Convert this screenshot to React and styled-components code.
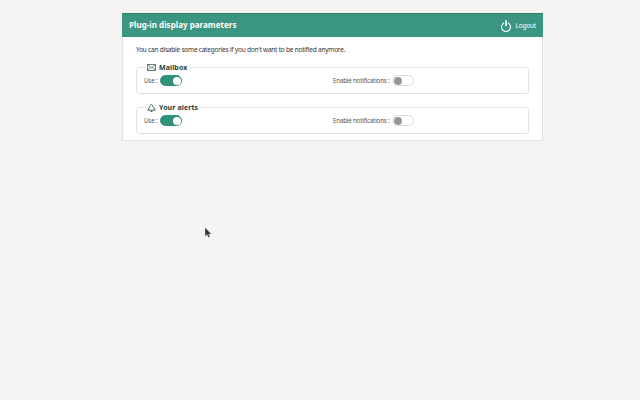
import React from 'react';
import styled, { createGlobalStyle } from 'styled-components';

const GlobalStyle = createGlobalStyle`
  html, body {
    margin: 0;
    height: 100%;
    background: #f5f4f2;
    font-family: "Noto Sans", "Open Sans", sans-serif;
    overflow: hidden;
  }
  * {
    box-sizing: border-box;
  }
`;

const Page = styled.div`
  position: relative;
  width: 640px;
  height: 400px;
  padding: 13px 0 0 122px;
`;

const Panel = styled.div`
  width: 421px;
  height: 128px;
  background: #fff;
  border: 1px solid #e3e3e3;
  border-top: 0;
`;

const Header = styled.header`
  height: 24px;
  margin: 0 -1px;
  padding: 0 7px 1px;
  display: flex;
  align-items: center;
  justify-content: space-between;
  background: #3a9680;
  border-top: 1px solid #2f7f6c;
  color: #fff;
`;

const Title = styled.h1`
  margin: 0 0 1px;
  font-size: 8px;
  font-weight: 700;
  letter-spacing: 0.03px;
`;

const Logout = styled.div`
  display: flex;
  align-items: center;
  gap: 4px;
  font-size: 6.5px;
  letter-spacing: -0.2px;
`;

const Body = styled.div`
  padding: 8px 13px 0;
`;

const Intro = styled.p`
  margin: 0 0 9px;
  height: 9px;
  font-size: 6.5px;
  line-height: 9px;
  letter-spacing: -0.22px;
  color: #333;
`;

const Group = styled.fieldset`
  margin: 0 0 9px;
  padding: 0 7px;
  height: 31px;
  display: grid;
  grid-template-columns: 189px 1fr;
  border: 1px solid #e2e2e2;
  border-radius: 3px;
`;

const Legend = styled.legend`
  margin-left: 2px;
  padding: 0 3px 0 1px;
  height: 9px;
  display: flex;
  align-items: center;
  gap: 3px;
  font-size: 7px;
  line-height: 9px;
  font-weight: 700;
  letter-spacing: 0.1px;
  color: #1d3d35;
`;

const Setting = styled.label`
  display: flex;
  align-items: center;
  gap: 3px;
  height: 11px;
  margin-top: 3px;
  font-size: 6.2px;
  letter-spacing: -0.18px;
  color: #555;
`;

const Track = styled.span`
  position: relative;
  display: block;
  width: 22px;
  height: 11px;
  border-radius: 6px;
  background: ${({ $on }) => ($on ? '#2f9278' : '#fff')};
  border: 1px solid ${({ $on }) => ($on ? '#2f9278' : '#dedede')};
`;

const Knob = styled.span`
  position: absolute;
  top: 0.5px;
  left: ${({ $on }) => ($on ? '11.5px' : '1px')};
  width: 8px;
  height: 8px;
  border-radius: 50%;
  background: ${({ $on }) => ($on ? '#fff' : '#979797')};
`;

const Cursor = styled.svg`
  position: absolute;
  left: 204px;
  top: 227px;
`;

function Toggle({ on }) {
  return (
    <Track $on={on}>
      <Knob $on={on} />
    </Track>
  );
}

function PowerIcon() {
  return (
    <svg width="12" height="13" viewBox="0 0 12 13" fill="none" stroke="#fff" strokeWidth="1.2" strokeLinecap="round">
      <path d="M3.600 4.200a4.500 4.500 0 1 0 4.800 0" />
      <path d="M6 1.700v4.800" strokeWidth="1.600" />
    </svg>
  );
}

function MailIcon() {
  return (
    <svg width="9" height="7" viewBox="0 0 9 7" fill="none" stroke="#33544b" strokeWidth="0.7">
      <rect x="0.5" y="0.5" width="8" height="6" />
      <path d="M0.500 0.500l4 3.200 4-3.200M0.500 6.500l3-3.400M8.500 6.500l-3-3.400" />
    </svg>
  );
}

function BellIcon() {
  return (
    <svg width="9" height="9" viewBox="0 0 9 9" fill="none" stroke="#1d3d35" strokeWidth="0.8">
      <path d="M0.800 7.200 3.300 2.800C3.700 2 4 1.500 4.500 1.500S5.300 2 5.700 2.800L8.200 7.200z" />
      <path d="M3.500 8.500h2" />
    </svg>
  );
}

function Category({ icon, name }) {
  return (
    <Group>
      <Legend>
        {icon}
        {name}
      </Legend>
      <Setting>
        Use :
        <Toggle on />
      </Setting>
      <Setting>
        Enable notifications :
        <Toggle />
      </Setting>
    </Group>
  );
}

export default function App() {
  return (
    <Page>
      <GlobalStyle />
      <Panel>
        <Header>
          <Title>Plug-in display parameters</Title>
          <Logout>
            <PowerIcon />
            Logout
          </Logout>
        </Header>
        <Body>
          <Intro>You can disable some categories if you don't want to be notified anymore.</Intro>
          <Category icon={<MailIcon />} name="Mailbox" />
          <Category icon={<BellIcon />} name="Your alerts" />
        </Body>
      </Panel>
      <Cursor width="8" height="11" viewBox="0 0 8 11">
        <path d="M1 0.500v9l2-2 1.500 3 1.500-.700-1.400-2.800h2.800z" fill="#333" stroke="#ddd" strokeWidth="0.4" />
      </Cursor>
    </Page>
  );
}
